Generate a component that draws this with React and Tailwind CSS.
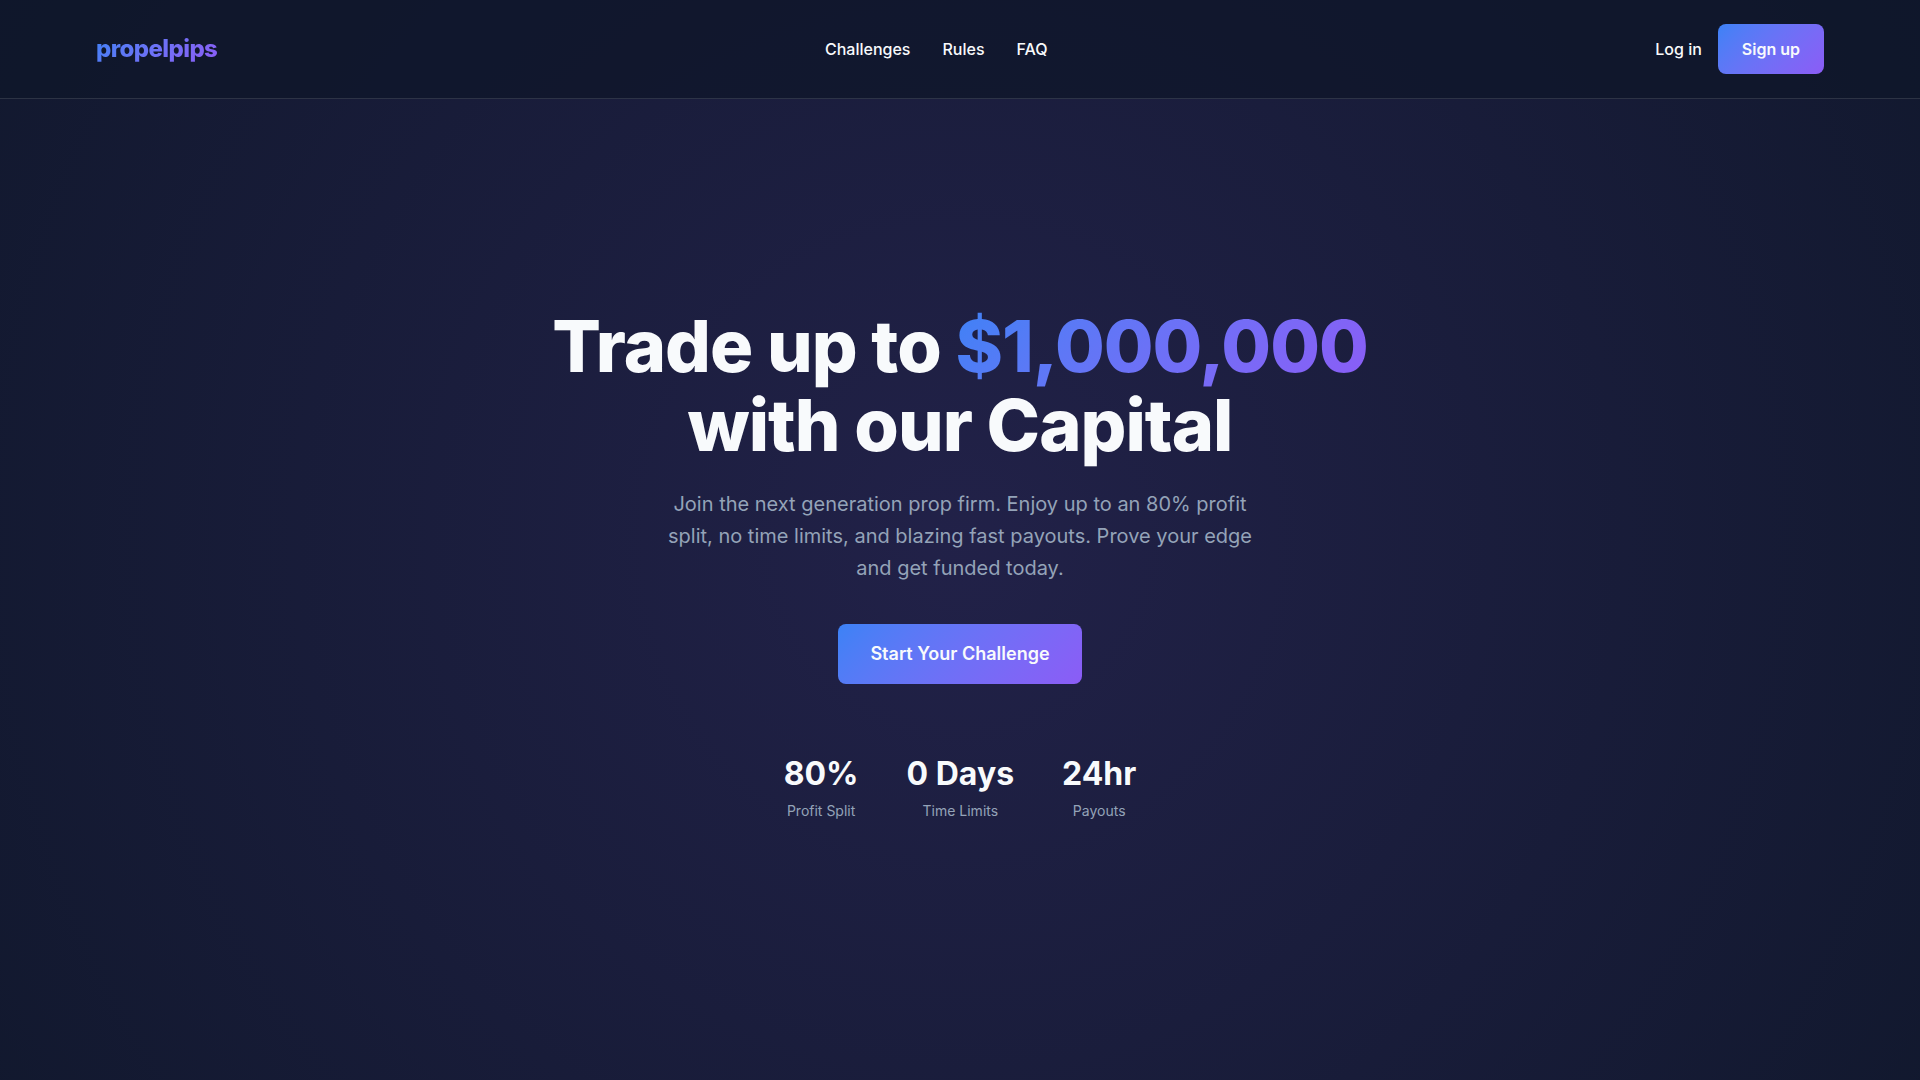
const links = ["Challenges", "Rules", "FAQ"];
const stats = [
  ["80%", "Profit Split"],
  ["0 Days", "Time Limits"],
  ["24hr", "Payouts"],
];

function Header() {
  return (
    <header className="border-b border-white/12 bg-[#0f172a]/80">
      <div className="flex items-center justify-between px-24 py-6">
        <a href="#" className="bg-linear-135 from-[#3b82f6] to-[#8b5cf6] bg-clip-text text-2xl font-extrabold tracking-tight text-transparent">
          propelpips
        </a>
        <nav className="flex gap-8 font-medium">
          {links.map((l) => (
            <a key={l} href="#">{l}</a>
          ))}
        </nav>
        <div className="flex items-center gap-4">
          <a href="#" className="font-medium">Log in</a>
          <button className="flex h-[50px] items-center rounded-lg bg-linear-135 from-[#3b82f6] to-[#8b5cf6] px-6 font-semibold">
            Sign up
          </button>
        </div>
      </div>
    </header>
  );
}

export default function App() {
  return (
    <div className="flex min-h-screen flex-col bg-[#0f172a] bg-[radial-gradient(circle_at_center,rgba(139,92,246,0.15),rgba(139,92,246,0)_118%)] font-['Inter',sans-serif] text-base leading-6 text-[#f8fafc]">
      <Header />
      <main className="flex grow flex-col items-center justify-center px-8 pb-[50px] text-center">
        <h1 className="max-w-[900px] text-[72px] leading-[79px] font-extrabold tracking-[-1px]">
          Trade up to{" "}
          <span className="bg-linear-135 from-[#3b82f6] to-[#8b5cf6] bg-clip-text text-transparent">$1,000,000</span>
          <br />
          with our Capital
        </h1>
        <p className="mt-6 max-w-[600px] text-xl leading-8 text-[#94a3b8]">
          Join the next generation prop firm. Enjoy up to an 80% profit split, no time limits, and blazing fast payouts. Prove your edge and get funded today.
        </p>
        <button className="mt-10 rounded-lg bg-linear-135 from-[#3b82f6] to-[#8b5cf6] px-8 py-4 text-lg leading-7 font-semibold">
          Start Your Challenge
        </button>
        <dl className="mt-16 flex gap-12">
          {stats.map(([v, l]) => (
            <div key={l} className="flex flex-col-reverse">
              <dt className="text-sm leading-6 text-[#94a3b8]">{l}</dt>
              <dd className="text-[32px] leading-[51px] font-bold">{v}</dd>
            </div>
          ))}
        </dl>
      </main>
    </div>
  );
}
